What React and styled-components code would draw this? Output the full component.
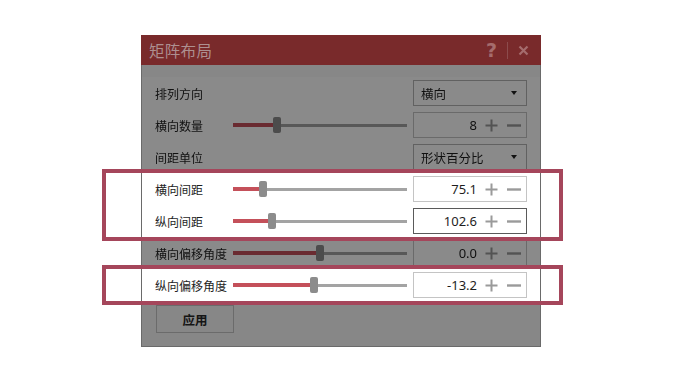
import React from 'react';
import styled, { createGlobalStyle } from 'styled-components';

const GlobalStyle = createGlobalStyle`
  html, body {
    margin: 0;
    padding: 0;
    background: #ffffff;
  }
  body {
    font-family: "Noto Sans", "Noto Sans CJK SC", sans-serif;
    color: #222;
  }
`;

const rows = [
    { label: '排列方向', kind: 'select', value: '横向' },
    { label: '横向数量', kind: 'slider', fill: 40, value: '8' },
    { label: '间距单位', kind: 'select', value: '形状百分比' },
    { label: '横向间距', kind: 'slider', fill: 26, value: '75.1', lit: 1 },
    { label: '纵向间距', kind: 'slider', fill: 35, value: '102.6', lit: 1, focused: true },
    { label: '横向偏移角度', kind: 'slider', fill: 83, value: '0.0' },
    { label: '纵向偏移角度', kind: 'slider', fill: 77, value: '-13.2', lit: 2 },
];

function PlusIcon() {
    return (
        <svg width="13" height="13" viewBox="0 0 13 13">
            <path d="M6.5 0.5v12M0.5 6.5h12" stroke="#9a9a9a" strokeWidth="2" fill="none" />
        </svg>
    );
}

function MinusIcon() {
    return (
        <svg width="14" height="13" viewBox="0 0 14 13">
            <path d="M0 6.5h14" stroke="#9a9a9a" strokeWidth="2.4" fill="none" />
        </svg>
    );
}

function CloseIcon() {
    return (
        <svg width="11" height="11" viewBox="0 0 11 11">
            <path d="M1.5 1.5l8 8M9.5 1.5l-8 8" stroke="#a56c6d" strokeWidth="2.2" fill="none" />
        </svg>
    );
}

function Slider({ fill }) {
    return (
        <SliderTrack>
            <SliderFill style={{ width: fill }} />
            <SliderThumb />
            <SliderRest />
        </SliderTrack>
    );
}

function ControlRow({ row, dim }) {
    return (
        <Row dim={dim}>
            <Label wide={row.kind === 'select'}>{row.label}</Label>
            {row.kind === 'slider' && <Slider fill={row.fill} />}
            {row.kind === 'select' ? (
                <Select>
                    <span>{row.value}</span>
                    <Caret />
                </Select>
            ) : (
                <NumberBox focused={row.focused}>
                    <Value>{row.value}</Value>
                    <PlusIcon />
                    <MinusIcon />
                </NumberBox>
            )}
        </Row>
    );
}

function App() {
    const first = rows.slice(0, 3);
    const spacing = rows.filter(r => r.lit === 1);
    return (
        <>
            <GlobalStyle />
            <Page>
                <Dialog>
                    <TitleBar>
                        <Title>矩阵布局</Title>
                        <TitleButtons>
                            <TitleGlyph>?</TitleGlyph>
                            <Separator />
                            <CloseIcon />
                        </TitleButtons>
                    </TitleBar>
                    <Body>
                        {first.map(r => <ControlRow key={r.label} row={r} dim />)}
                        <LitGroup>
                            <Frame />
                            {spacing.map(r => <ControlRow key={r.label} row={r} />)}
                        </LitGroup>
                        <ControlRow row={rows[5]} dim />
                        <LitGroup>
                            <Frame />
                            <ControlRow row={rows[6]} />
                        </LitGroup>
                        <Footer>
                            <ApplyButton>应用</ApplyButton>
                        </Footer>
                    </Body>
                </Dialog>
            </Page>
        </>
    );
}

const Page = styled.div`
    padding: 35px 0 0 141px;
`

const Dialog = styled.div`
    width: 400px;
    box-sizing: border-box;
    border: 1px solid #6a6a6a;
    border-top: none;
`

const TitleBar = styled.div`
    height: 30px;
    margin: 0 -1px;
    background: #792a2b;
    display: flex;
    align-items: center;
    justify-content: space-between;
    padding: 0 12px 0 8px;
`

const Title = styled.div`
    font-family: "Noto Sans CJK SC", sans-serif;
    font-size: 15.5px;
    color: #ad8f90;
    letter-spacing: 0.3px;
`

const TitleButtons = styled.div`
    display: flex;
    align-items: center;
    gap: 10px;
`

const TitleGlyph = styled.span`
    font-family: "DejaVu Sans", sans-serif;
    font-weight: bold;
    font-size: 19px;
    line-height: 1;
    color: #a56c6d;
`

const Separator = styled.span`
    width: 1px;
    height: 17px;
    background: #8c4c4d;
`

const Body = styled.div`
    background: #878787;
    padding: 12px 0 13px;
`

const Row = styled.div`
    display: flex;
    align-items: center;
    height: 32px;
    padding: 0 13px;
    background: #ffffff;
    ${p => p.dim && 'filter: brightness(0.54);'}
`

const Label = styled.div`
    width: 78px;
    flex: ${p => (p.wide ? '1' : 'none')};
    font-family: "Noto Sans CJK SC", sans-serif;
    font-size: 12px;
    color: #1e1e1e;
    white-space: nowrap;
`

const SliderTrack = styled.div`
    width: 174px;
    margin-right: 6px;
    display: flex;
    align-items: center;
`

const SliderFill = styled.div`
    height: 4px;
    background: #c4505a;
`

const SliderThumb = styled.div`
    width: 8px;
    height: 16px;
    border-radius: 2px;
    background: #8c8c8c;
`

const SliderRest = styled.div`
    flex: 1;
    height: 3px;
    background: #a3a3a3;
`

const Select = styled.div`
    width: 114px;
    height: 26px;
    box-sizing: border-box;
    border: 1px solid #b4b4b4;
    display: flex;
    align-items: center;
    justify-content: space-between;
    padding: 0 9px 0 7px;
    font-family: "Noto Sans CJK SC", sans-serif;
    font-size: 12.5px;
    color: #1e1e1e;
`

const Caret = styled.span`
    width: 0;
    height: 0;
    border-left: 3px solid transparent;
    border-right: 3px solid transparent;
    border-top: 4px solid #222;
`

const NumberBox = styled.div`
    width: 114px;
    height: 26px;
    box-sizing: border-box;
    border: 1px solid ${p => (p.focused ? '#5a5a5a' : '#c4c4c4')};
    display: flex;
    align-items: center;
    justify-content: flex-end;
    gap: 8px;
    padding-right: 5px;
    svg + svg {
        margin-left: 1px;
    }
`

const Value = styled.span`
    font-family: "Noto Sans", sans-serif;
    font-size: 13px;
    color: #1e1e1e;
`

const LitGroup = styled.div`
    position: relative;
`

const Frame = styled.div`
    position: absolute;
    left: -40px;
    right: -23px;
    top: -4px;
    bottom: -4px;
    border: 4px solid #a5465b;
    pointer-events: none;
    z-index: 2;
`

const Footer = styled.div`
    padding: 4px 14px 0;
    display: flex;
`

const ApplyButton = styled.div`
    width: 78px;
    height: 28px;
    box-sizing: border-box;
    border: 1px solid #6b6b6b;
    display: flex;
    align-items: center;
    justify-content: center;
    font-family: "Noto Sans CJK SC", sans-serif;
    font-weight: bold;
    font-size: 12.5px;
    color: #151515;
`

export default App;
